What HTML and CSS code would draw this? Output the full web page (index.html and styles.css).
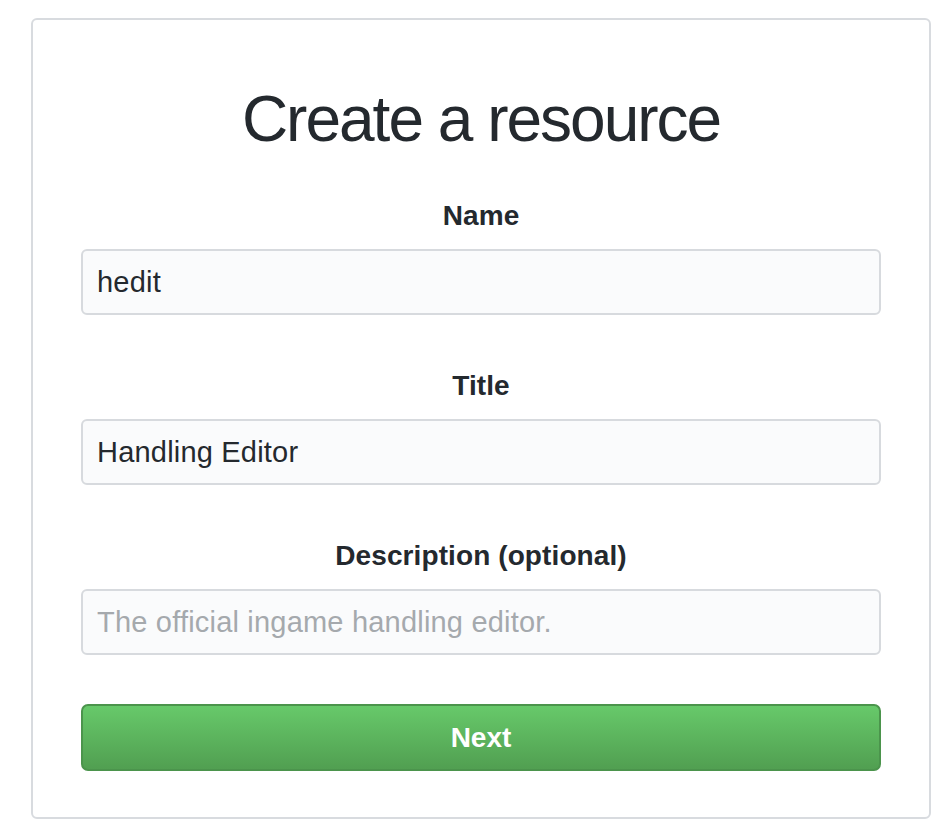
FILE: index.html
```html
<!DOCTYPE html>
<html lang="en">
<head>
<meta charset="utf-8">
<title>Create a resource</title>
<link rel="stylesheet" href="styles.css">
</head>
<body>
<main class="card">
  <h1 class="title">Create a resource</h1>
  <form class="form">
    <div class="field">
      <label class="label" for="name">Name</label>
      <input class="input" id="name" type="text" value="hedit">
    </div>
    <div class="field">
      <label class="label" for="title">Title</label>
      <input class="input" id="title" type="text" value="Handling Editor">
    </div>
    <div class="field field-last">
      <label class="label" for="desc">Description (optional)</label>
      <input class="input" id="desc" type="text" placeholder="The official ingame handling editor.">
    </div>
    <button class="btn" type="button">Next</button>
  </form>
</main>
</body>
</html>
```

FILE: styles.css
```css
html, body {
  margin: 0;
  padding: 0;
  background: #ffffff;
}

body {
  padding: 18px 0 0 31px;
  font-family: "Liberation Sans", Arial, sans-serif;
  color: #24292e;
}

.card {
  box-sizing: border-box;
  width: 900px;
  border: 2px solid #d8dbdf;
  border-radius: 6px;
  padding: 59px 48px 46px;
}

.title {
  margin: 0 0 37px;
  font-size: 64px;
  line-height: 80px;
  font-weight: 400;
  letter-spacing: -2px;
  text-align: center;
  color: #24292e;
}

.form {
  display: flex;
  flex-direction: column;
}

.field {
  display: flex;
  flex-direction: column;
  margin-bottom: 51px;
}

.field-last {
  margin-bottom: 49px;
}

.label {
  display: block;
  font-size: 28px;
  line-height: 40px;
  font-weight: 700;
  letter-spacing: 0.1px;
  text-align: center;
  margin-bottom: 13px;
  color: #24292e;
}

.input {
  box-sizing: border-box;
  width: 100%;
  height: 66px;
  margin: 0;
  padding: 0 14px;
  font-family: "Liberation Sans", Arial, sans-serif;
  font-size: 29px;
  letter-spacing: 0.2px;
  color: #24292e;
  background: #fafbfc;
  border: 2px solid #d7dade;
  border-radius: 6px;
  outline: none;
}

.input::placeholder {
  color: #a5a9ad;
  opacity: 1;
}

.btn {
  box-sizing: border-box;
  width: 100%;
  height: 67px;
  margin: 0;
  font-family: "Liberation Sans", Arial, sans-serif;
  font-size: 28px;
  font-weight: 700;
  color: #ffffff;
  background: linear-gradient(#67c96a, #519f51);
  border: 2px solid #4b944c;
  border-radius: 7px;
  cursor: pointer;
}
```
